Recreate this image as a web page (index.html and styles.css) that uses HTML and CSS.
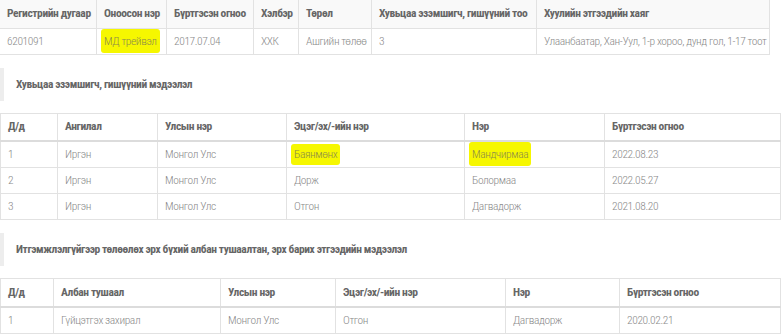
FILE: index.html
```html
<!DOCTYPE html>
<html lang="mn">
<head>
  <meta charset="UTF-8" />
  <meta name="viewport" content="width=device-width, initial-scale=1" />
  <title>Хуулийн этгээдийн мэдээлэл</title>
  <link rel="stylesheet" href="styles.css">
</head>
<body>

  <!-- ЕРӨНХИЙ МЭДЭЭЛЭЛ -->
  <table class="grid grid-main">
    <colgroup>
      <col class="c-reg"><col class="c-name"><col class="c-date"><col class="c-form">
      <col class="c-type"><col class="c-count"><col class="c-addr">
    </colgroup>
    <thead>
      <tr>
        <th>Регистрийн дугаар</th>
        <th>Оноосон нэр</th>
        <th>Бүртгэсэн огноо</th>
        <th>Хэлбэр</th>
        <th>Төрөл</th>
        <th>Хувьцаа эзэмшигч, гишүүний тоо</th>
        <th>Хуулийн этгээдийн хаяг</th>
      </tr>
    </thead>
    <tbody>
      <tr>
        <td>6201091</td>
        <td><span class="mark mark-tall">МД трейвэл</span></td>
        <td>2017.07.04</td>
        <td>ХХК</td>
        <td>Ашгийн төлөө</td>
        <td>3</td>
        <td>Улаанбаатар, Хан-Уул, 1-р хороо, дунд гол, 1-17 тоот</td>
      </tr>
    </tbody>
  </table>

  <!-- ХУВЬЦАА ЭЗЭМШИГЧ -->
  <div class="section-title">Хувьцаа эзэмшигч, гишүүний мэдээлэл</div>

  <table class="grid grid-full">
    <colgroup>
      <col class="s-no"><col class="s-kind"><col class="s-country"><col class="s-parent">
      <col class="s-name"><col class="s-date">
    </colgroup>
    <thead>
      <tr>
        <th>Д/д</th>
        <th>Ангилал</th>
        <th>Улсын нэр</th>
        <th>Эцэг/эх/-ийн нэр</th>
        <th>Нэр</th>
        <th>Бүртгэсэн огноо</th>
      </tr>
    </thead>
    <tbody>
      <tr>
        <td>1</td>
        <td>Иргэн</td>
        <td>Монгол Улс</td>
        <td><span class="mark">Баянмөнх</span></td>
        <td><span class="mark mark-tall">Мандчирмаа</span></td>
        <td>2022.08.23</td>
      </tr>
      <tr>
        <td>2</td>
        <td>Иргэн</td>
        <td>Монгол Улс</td>
        <td>Дорж</td>
        <td>Болормаа</td>
        <td>2022.05.27</td>
      </tr>
      <tr>
        <td>3</td>
        <td>Иргэн</td>
        <td>Монгол Улс</td>
        <td>Отгон</td>
        <td>Дагвадорж</td>
        <td>2021.08.20</td>
      </tr>
    </tbody>
  </table>

  <!-- АЛБАН ТУШААЛТАН -->
  <div class="section-title">Итгэмжлэлгүйгээр төлөөлөх эрх бүхий албан тушаалтан, эрх барих этгээдийн мэдээлэл</div>

  <table class="grid grid-full">
    <colgroup>
      <col class="o-no"><col class="o-pos"><col class="o-country"><col class="o-parent">
      <col class="o-name"><col class="o-date">
    </colgroup>
    <thead>
      <tr>
        <th>Д/д</th>
        <th>Албан тушаал</th>
        <th>Улсын нэр</th>
        <th>Эцэг/эх/-ийн нэр</th>
        <th>Нэр</th>
        <th>Бүртгэсэн огноо</th>
      </tr>
    </thead>
    <tbody>
      <tr>
        <td>1</td>
        <td>Гүйцэтгэх захирал</td>
        <td>Монгол Улс</td>
        <td>Отгон</td>
        <td>Дагвадорж</td>
        <td>2020.02.21</td>
      </tr>
    </tbody>
  </table>

</body>
</html>
```

FILE: styles.css
```css
* {
  box-sizing: border-box;
  margin: 0;
  padding: 0;
}

/* нарийн үсэгтэй фонт байхгүй тул зайг нь шахав */
body {
  font-family: "Roboto Condensed", Roboto, sans-serif;
  font-size: 11.5px;
  letter-spacing: -0.4px;
  color: #999;
  background: #fff;
  width: 781px;
}

/* таблиц */
.grid {
  border-collapse: collapse;
  table-layout: fixed;
}

.grid th,
.grid td {
  border: 1px solid #e2e2e2;
  padding: 5px 7px;
  line-height: 15px;
  text-align: left;
  white-space: nowrap;
  overflow: hidden;
}

.grid th {
  font-weight: 700;
  color: #666;
}

.grid td {
  font-weight: 300;
  color: #8a8a8a;
}

.grid-main {
  width: 770px;
  margin-left: -1px;
}

.grid-main thead th {
  background: #f9f9f9;
  height: 28px;
  border-top: 0;
}

.grid-main td {
  height: 26px;
}

.grid-full {
  width: 780px;
}

.grid-full thead th {
  height: 28px;
  border-bottom: 2px solid #dcdcdc;
}

.grid-full td {
  height: 26px;
}

/* шарын тэмдэглэгээ */
.mark {
  background: #f6f700;
  color: #8c8c4a;
  border-radius: 3px;
  padding: 3px 3px 4px;
  margin-left: -3px;
}

.mark-tall {
  padding: 5px 3px;
}

/* хэсгийн гарчиг */
.section-title {
  border-left: 4px solid #ededed;
  padding: 9px 12px;
  line-height: 15px;
  margin: 13px 0 12px;
  font-weight: 700;
  color: #666;
}

/* баганын өргөн */
.c-reg { width: 97px; }
.c-name { width: 70px; }
.c-date { width: 87px; }
.c-form { width: 45px; }
.c-type { width: 73px; }
.c-count { width: 165px; }
.c-addr { width: 233px; }

.s-no { width: 57px; }
.s-kind { width: 100px; }
.s-country { width: 129px; }
.s-parent { width: 178px; }
.s-name { width: 140px; }
.s-date { width: 176px; }

.o-no { width: 53px; }
.o-pos { width: 167px; }
.o-country { width: 115px; }
.o-parent { width: 170px; }
.o-name { width: 114px; }
.o-date { width: 161px; }
```
